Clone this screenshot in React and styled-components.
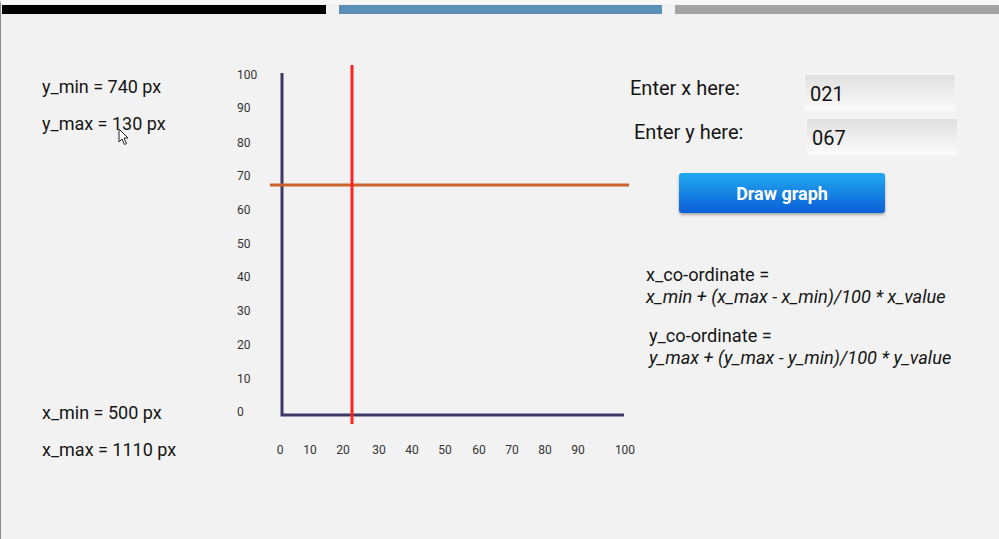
import React from "react";
import styled, { createGlobalStyle } from "styled-components";

const GlobalStyle = createGlobalStyle`
  html, body {
    margin: 0;
    padding: 0;
    background: #f2f2f2;
    font-family: Roboto, "Liberation Sans", sans-serif;
    color: #151515;
  }
`;

const Page = styled.div`
  position: relative;
  width: 999px;
  height: 539px;
  box-sizing: border-box;
  border-left: 1px solid #8a8a8a;
  border-top: 4px solid #f7f7f7;
  background: #f2f2f2;
  overflow: hidden;
`;

const Steps = styled.div`
  display: flex;
  gap: 13px;
  padding: 1px 0 0 1px;
`;

const Step = styled.div`
  flex: 1;
  height: 9px;
  background: ${(props) => props.color};
`;

const Main = styled.div`
  display: flex;
  padding-top: 46px;
`;

const Limits = styled.div`
  width: 188px;
  padding: 16px 0 0 41px;
  height: 384px;
  display: flex;
  flex-direction: column;
  justify-content: space-between;
`;

const LimitGroup = styled.div`
  display: flex;
  flex-direction: column;
  gap: 16px;
`;

const Limit = styled.div`
  font-size: 18px;
  line-height: 21px;
`;

const Chart = styled.svg`
  display: block;
  flex: none;
`;

const Controls = styled.div`
  margin-left: -12px;
  display: flex;
  flex-direction: column;
`;

const Field = styled.div`
  display: flex;
  align-items: flex-start;
  margin-top: ${(props) => props.top}px;
  padding-left: ${(props) => props.shift}px;
`;

const FieldLabel = styled.label`
  width: ${(props) => props.width}px;
  font-size: 20px;
  line-height: 24px;
  margin-top: 2px;
`;

const Input = styled.input`
  width: 152px;
  height: 38px;
  box-sizing: border-box;
  border: 1px solid #f4f4f4;
  background: linear-gradient(#e0e0e0, #fbfbfb);
  font-family: Roboto, "Liberation Sans", sans-serif;
  font-size: 20px;
  color: #111;
  padding: 2px 0 0 5px;
  outline: none;
`;

const DrawButton = styled.button`
  margin: 17px 0 0 49px;
  width: 206px;
  height: 40px;
  border: none;
  border-radius: 3px;
  background: linear-gradient(#22aaf0, #0b5ed8);
  box-shadow: 0 2px 3px rgba(0, 0, 0, 0.3);
  color: #fff;
  font-family: Roboto, "Liberation Sans", sans-serif;
  font-weight: 700;
  font-size: 18px;
  cursor: pointer;
`;

const Formula = styled.div`
  margin-top: ${(props) => props.top}px;
  padding-left: ${(props) => props.shift}px;
  font-size: 18.2px;
  line-height: 22px;
`;

const Expr = styled.div`
  font-style: italic;
`;

const Cursor = styled.svg`
  position: absolute;
  left: 117px;
  top: 124px;
`;

const yTicks = [
  [100, 16], [90, 49], [80, 84], [70, 117], [60, 151], [50, 185],
  [40, 218], [30, 252], [20, 286], [10, 320], [0, 353],
];

const xTicks = [
  [0, 50], [10, 80], [20, 113], [30, 149], [40, 182], [50, 215],
  [60, 249], [70, 282], [80, 315], [90, 348], [100, 395],
];

const Graph = () => (
  <Chart width="412" height="400" viewBox="0 0 412 400">
    {yTicks.map(([v, y]) => (
      <text key={v} x="7" y={y} dominantBaseline="middle" fontSize="12" fill="#333" fontFamily="Roboto, sans-serif">
        {v}
      </text>
    ))}
    {xTicks.map(([v, x]) => (
      <text key={v} x={x} y="391" textAnchor="middle" dominantBaseline="middle" fontSize="12" fill="#333" fontFamily="Roboto, sans-serif">
        {v}
      </text>
    ))}
    <polyline points="52,13 52,355 394,355" fill="none" stroke="#3b3866" strokeWidth="3" />
    <line x1="40" y1="125" x2="399" y2="125" stroke="#c9622b" strokeWidth="3" />
    <line x1="122" y1="5" x2="122" y2="364" stroke="#ff2323" strokeWidth="3" />
  </Chart>
);

export default function App() {
  return (
    <>
      <GlobalStyle />
      <Page>
        <Steps>
          <Step color="#000" />
          <Step color="#5a90b8" />
          <Step color="#a4a4a4" />
        </Steps>
        <Main>
          <Limits>
            <LimitGroup>
              <Limit>y_min = 740 px</Limit>
              <Limit>y_max = 130 px</Limit>
            </LimitGroup>
            <LimitGroup>
              <Limit>x_min = 500 px</Limit>
              <Limit>x_max = 1110 px</Limit>
            </LimitGroup>
          </Limits>
          <Graph />
          <Controls>
            <Field top={14} shift={0}>
              <FieldLabel width={174}>Enter x here:</FieldLabel>
              <Input defaultValue="021" />
            </Field>
            <Field top={6} shift={4}>
              <FieldLabel width={172}>Enter y here:</FieldLabel>
              <Input defaultValue="067" />
            </Field>
            <DrawButton>Draw graph</DrawButton>
            <Formula top={51} shift={16}>
              <div>x_co-ordinate =</div>
              <Expr>x_min + (x_max - x_min)/100 * x_value</Expr>
            </Formula>
            <Formula top={17} shift={19}>
              <div>y_co-ordinate =</div>
              <Expr>y_max + (y_max - y_min)/100 * y_value</Expr>
            </Formula>
          </Controls>
        </Main>
        <Cursor width="12" height="18" viewBox="0 0 12 18">
          <path d="M1 1 L1 14 L4 11 L6.5 16.5 L8.5 15.5 L6 10 L10 10 Z" fill="#fff" stroke="#222" strokeWidth="1" />
        </Cursor>
      </Page>
    </>
  );
}
